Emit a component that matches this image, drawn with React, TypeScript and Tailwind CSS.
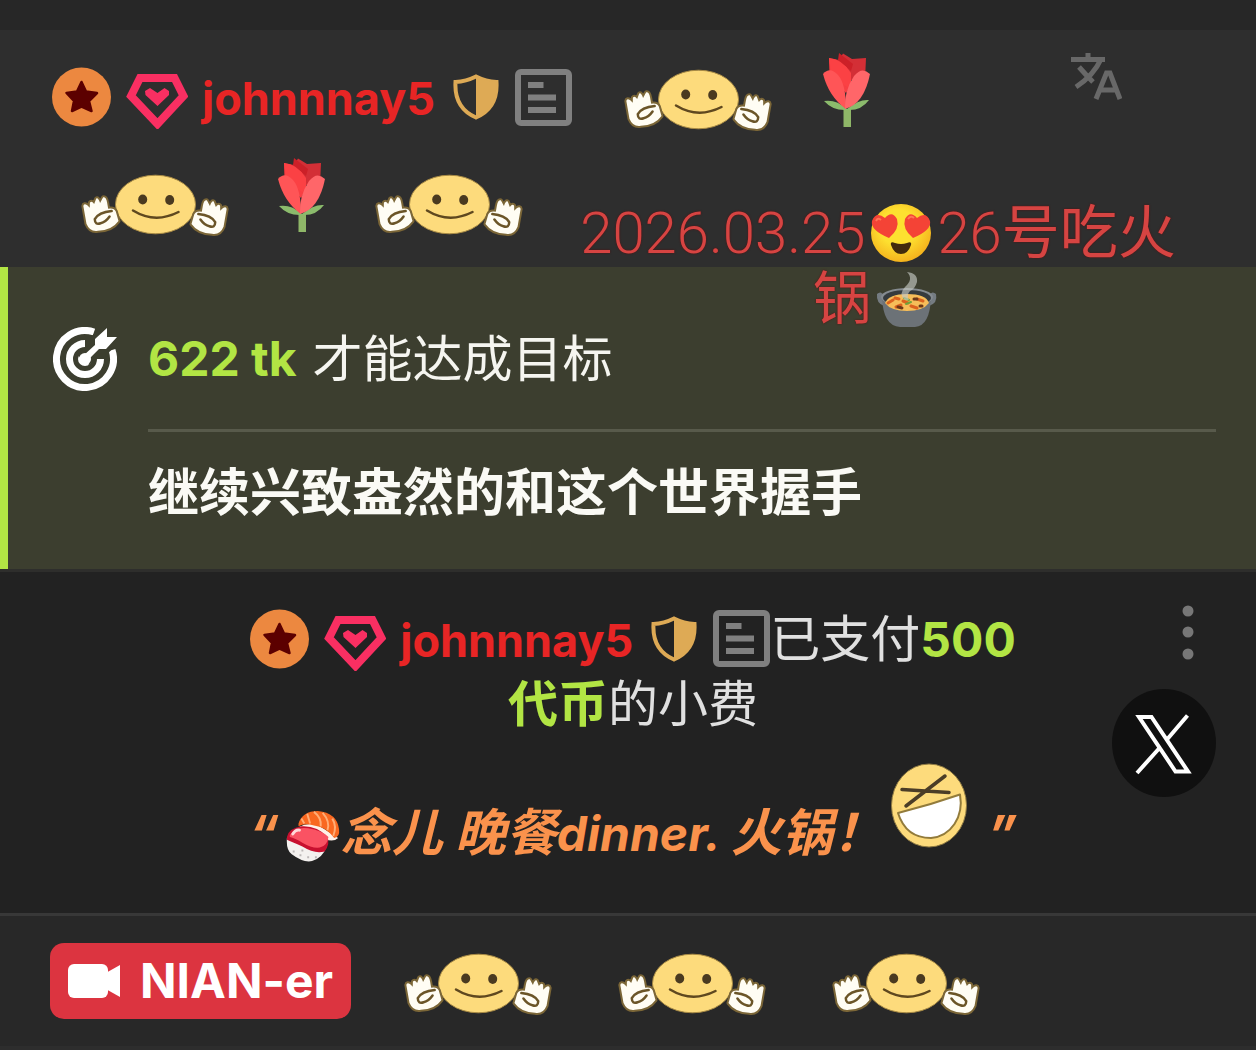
import type { ReactNode } from 'react';

const FONT = "font-['Inter','Noto_Sans_CJK_SC',sans-serif]";

function StarBadge() {
  return (
    <svg width="60" height="60" viewBox="0 0 60 60" className="shrink-0">
      <circle cx="29.500" cy="30" r="29.500" fill="#ec8840" />
      <path
        d="M29.500 15 L34 24.500 L45 26 L37 34 L39.500 44 L29.500 39.500 L20 44 L22 34 L14.500 26 L25 24.500 Z"
        fill="#5c0000"
        stroke="#5c0000"
        strokeWidth="2.500"
        strokeLinejoin="round"
      />
    </svg>
  );
}

function GemBadge() {
  return (
    <svg width="62" height="64" viewBox="0 0 62 64" className="shrink-0">
      <path d="M14 13 H48.500 L57.500 31 L31.500 59 L5 31 Z" fill="none" stroke="#f92f62" strokeWidth="8" />
      <path d="M19 26 L24 23 L31.500 28 L38.500 23 L43 26 V30 L31.500 41 L19.500 30 Z" fill="#f92f62" />
    </svg>
  );
}

function ShieldBadge() {
  return (
    <svg width="46" height="46" viewBox="0 0 46 46" className="shrink-0">
      <path
        d="M23 2.500 Q33 7.500 43.500 8 Q45 34 23 43.500 Q1 34 2.500 8 Q13 7.500 23 2.500 Z"
        fill="none"
        stroke="#deaa55"
        strokeWidth="4"
      />
      <path d="M23 2 Q33 8 44 8 Q45 34 23 44 Z" fill="#deaa55" />
    </svg>
  );
}

function NoteBadge() {
  return (
    <svg width="57" height="57" viewBox="0 0 57 57" className="shrink-0">
      <rect x="3" y="3" width="51" height="51" rx="3" fill="none" stroke="#808080" strokeWidth="6" />
      <path d="M13 16 H28.500 M13 28.500 H41 M13 41 H41" stroke="#808080" strokeWidth="6" />
    </svg>
  );
}

function HugHand() {
  return (
    <g strokeLinecap="round" strokeLinejoin="round" transform="rotate(-10 20 45)">
      <path
        d="M4 34 Q5 31 8 34 L10 37 L11 32 Q13 30 15 34 L18 29 Q20 28 21 34 L25 29 Q28 29 28 35 L28 41 Q34 41 35 45 L36 55 Q28 63 14 61 Q6 61 4 52 Z"
        fill="#fffdf4"
        stroke="#7b6637"
        strokeWidth="4"
        paintOrder="stroke"
      />
      <path d="M31 44 Q18 43 13 49 Q12 55 18 54 Q23 54 28 49" fill="none" stroke="#6b5528" strokeWidth="2.500" />
    </g>
  );
}

function HugFace() {
  return (
    <svg width="148" height="66" viewBox="0 0 148 66" className="shrink-0 overflow-visible">
      <ellipse cx="74.500" cy="35.500" rx="40" ry="29.300" fill="#fddb7c" stroke="#a98b45" strokeWidth="1" />
      <ellipse cx="61.700" cy="30.500" rx="4.500" ry="5" fill="#4a3a20" />
      <ellipse cx="88.700" cy="31" rx="4.500" ry="5" fill="#4a3a20" />
      <path d="M52 41.500 Q74 55 97.500 43" fill="none" stroke="#5f481f" strokeWidth="2.500" strokeLinecap="round" />
      <HugHand />
      <g transform="translate(148 3) scale(-1 1)">
        <HugHand />
      </g>
    </svg>
  );
}

function Rose() {
  return (
    <svg width="50" height="88" viewBox="0 0 50 88" className="shrink-0">
      <path d="M21.500 56 H29 V74 H21.500 Z" fill="#8fb768" />
      <path d="M25 57 Q11 58 2 48 Q14 46 25 56 Q37 46 47 47 Q39 58 25 57 Z" fill="#8bbb6c" />
      <path d="M21 0.500 L30 6 L44 5 L43 27 H8 L7 5 L17 7 Z" fill="#d32f36" />
      <path d="M7 5 L24 13 L30 30 L24 40 L8 24 Z" fill="#f73f43" />
      <path d="M17 0 L31 11 L29 18 L16 7 Z" fill="#cc2028" />
      <path d="M7 5 Q20 6 29 20 V36 L10 25 Z" fill="#fb4144" />
      <path d="M1 21 Q8 13 16 22 Q24 31 24 56 Q7 44 1 21 Z" fill="#ff5557" />
      <path d="M48 21 Q40 13 32 23 Q22 38 23 56 Q42 51 48 21 Z" fill="#ff6669" />
    </svg>
  );
}

function LaughFace() {
  return (
    <svg width="78" height="86" viewBox="0 0 78 86" className="shrink-0">
      <ellipse cx="39" cy="42.500" rx="37.500" ry="41.500" fill="#fddb7c" stroke="#907b43" strokeWidth="1" />
      <path d="M12 26.500 L59 29.500 M16 43 L55 13" stroke="#4b3d27" strokeWidth="3.500" strokeLinecap="round" />
      <path
        d="M8 50 Q40 42 70 31.500 C74 54 61 73 41 75 C24 75 13 66 8 50 Z"
        fill="#ffffff"
        stroke="#927b3b"
        strokeWidth="2"
        strokeLinejoin="round"
      />
    </svg>
  );
}

function HeartEyes() {
  return (
    <svg width="72" height="60" viewBox="0 0 72 60" className="shrink-0">
      <defs>
        <radialGradient id="face" cx="45%" cy="40%" r="60%">
          <stop offset="0.5" stopColor="#fde030" />
          <stop offset="1" stopColor="#f5b31d" />
        </radialGradient>
      </defs>
      <ellipse cx="36" cy="30" rx="30" ry="29" fill="url(#face)" />
      <path d="M24 35 Q5 27 7 18 Q11 8 20 15 Q27 7 32 16 Q35 26 24 35 Z" fill="#f44336" />
      <path d="M48 35 Q37 26 40 16 Q45 7 52 15 Q61 8 65 18 Q67 27 48 35 Z" fill="#f44336" />
      <path d="M11 18 Q13 14 16 17 M43 16 Q46 12 49 15" stroke="#ff7555" strokeWidth="2" fill="none" />
      <path d="M26 42 Q25 38 30 40 Q36 42 42 40 Q47 38 46 42 Q43 51 36 51 Q29 51 26 42 Z" fill="#422b0d" />
    </svg>
  );
}

function HotPot() {
  return (
    <svg width="72" height="60" viewBox="0 0 72 60" className="shrink-0">
      <path d="M6 25 Q10 21 13 27 V37 Q5 34 6 25 Z M65 25 Q61 21 58 27 V37 Q67 34 65 25 Z" fill="#757c82" />
      <path d="M11 28 Q12 57 29 58 H44 Q59 57 60 28 Z" fill="#6c7277" />
      <ellipse cx="36" cy="28" rx="26" ry="9" fill="#858b90" />
      <ellipse cx="36" cy="29" rx="24" ry="8" fill="#353a3d" />
      <path d="M14 34 Q18 25 36 25 Q55 25 58 34 Q52 42 36 42 Q20 42 14 34 Z" fill="#f6bd59" />
      <path
        d="M17 34 L22 31 M25 38 L30 36 M40 37 L46 39 M46 30 L52 32 M32 32 L37 34 M24 29 L28 30"
        stroke="#db621f"
        strokeWidth="3"
        strokeLinecap="round"
      />
      <path d="M27 38 L31 39 M43 30 H46 M49 37 H51" stroke="#6b3718" strokeWidth="3" strokeLinecap="round" />
      <path d="M33 29 L38 31 M35 35 L40 33" stroke="#71a23a" strokeWidth="2" strokeLinecap="round" />
      <path d="M34 31 Q27 25 34 18 Q43 10 36 3 Q47 4 46 13 Q44 20 39 22 Q35 26 38 31 Z" fill="#c5cac3" fillOpacity="0.65" />
    </svg>
  );
}

function Sushi() {
  return (
    <svg width="56" height="54" viewBox="0 0 58 54" className="shrink-0">
      <path d="M14 18 Q27 10 41 20 L55 29 Q50 34 41 30 Z" fill="#fff0e8" />
      <path d="M14 14 Q18 1 34 1 Q54 3 56 20 Q57 28 51 29 Q42 17 30 16 Q20 13 14 17 Z" fill="#f96820" />
      <path
        d="M23 4 L26 14 M30 2 Q38 8 37 17 M39 3 Q47 12 44 21 M49 9 Q54 17 50 27 M17 9 L20 14"
        stroke="#ffad76"
        strokeWidth="2"
        fill="none"
      />
      <path d="M2 29 Q1 42 7 46 Q19 55 28 53 Q39 50 43 38 Z" fill="#f4f1ef" />
      <path d="M2 28 Q4 19 17 17 Q33 16 44 28 Q47 35 41 43 Q31 46 18 38 Q7 33 2 31 Z" fill="#c8102f" />
      <path d="M5 26 Q11 17 24 19 Q38 21 45 28 Q44 37 36 39 Q28 40 18 34 Q10 29 5 28 Z" fill="#fa5263" />
      <path d="M8 25 Q11 20 15 21" stroke="#ffd9da" strokeWidth="3" fill="none" strokeLinecap="round" />
      <path d="M8 43 H10 M15 47 H17 M23 49 H25 M31 49 H33 M17 42 H19" stroke="#bcb8b8" strokeWidth="2" />
    </svg>
  );
}

function TargetIcon() {
  return (
    <svg width="64" height="64" viewBox="0 0 64 64" className="shrink-0" fill="none" stroke="#ffffff">
      <path d="M41 5 A28.500 28.500 0 1 0 59 23" strokeWidth="7" />
      <path d="M32 16.500 A15.500 15.500 0 1 0 47.500 32" strokeWidth="7" />
      <circle cx="32" cy="32" r="7" fill="#ffffff" stroke="none" />
      {/* background halo keeps the arrow clear of the rings */}
      <path
        d="M42 12 L54 1 V10 H64 L53 22 H46 L36 32 L31 28 L42 18 Z"
        fill="#ffffff"
        stroke="#3c3e2f"
        strokeWidth="9"
        paintOrder="stroke"
      />
      <circle cx="32" cy="32" r="6" fill="#ffffff" stroke="none" />
    </svg>
  );
}

function UserTag({ children }: { children?: ReactNode }) {
  return (
    <span className="flex items-center">
      <span className="flex items-center gap-[14px]">
        <StarBadge />
        <GemBadge />
        <a href="#johnnnay5" className="pt-1 text-[45px] leading-[60px] font-bold text-[#e82525]">
          johnnnay5
        </a>
      </span>
      <span className="ml-[18px] flex items-center gap-4">
        <ShieldBadge />
        <NoteBadge />
      </span>
      {children}
    </span>
  );
}

function RoomNotice() {
  return (
    <div className="absolute top-[200px] right-0 w-[756px] text-center text-[58px] leading-[66px] font-light text-[#d64442] font-['Roboto','Noto_Sans_CJK_SC',sans-serif] [text-shadow:0_0_2px_#5c0f0f]">
      <div className="flex items-center justify-center">
        2026.03.25
        <HeartEyes />
        <span>
          26<span className="font-normal">号吃火</span>
        </span>
      </div>
      <div className="flex items-center justify-center">
        <span className="font-normal">锅</span>
        <HotPot />
      </div>
    </div>
  );
}

export default function App() {
  return (
    <main className={`relative min-h-screen overflow-hidden bg-[#2d2d2d] ${FONT}`}>
      <div className="h-[30px] bg-[#272727]" />

      {/* Chat message */}
      <section className="flex items-start justify-between bg-[#2e2e2e] pt-[23px] pr-[134px] pb-[21px] pl-[52px]">
        <div className="flex flex-col gap-[17px]">
          <div className="flex items-center gap-[52px]">
            <UserTag />
            <span className="flex items-center gap-[50px]">
              <HugFace />
              <Rose />
            </span>
          </div>
          <div className="ml-[29px] flex items-center gap-12">
            <HugFace />
            <Rose />
            <HugFace />
          </div>
        </div>
        <button aria-label="翻译" className="cursor-pointer">
          <svg width="52" height="48" viewBox="0 0 52 48" fill="none" stroke="#686868" strokeWidth="5">
            <path d="M1 6.500 H35 M18 0 V6 M31 6 Q24 22 6 34 M9 14 Q16 22 23 29" />
            <path d="M26 46 L36.500 20 H40 L50 46 M30 37 H47" />
          </svg>
        </button>
      </section>

      {/* Goal */}
      <section className="flex gap-[31px] border-l-8 border-[#b2e544] bg-[#3c3e2f] pt-[60px] pr-10 pb-[44px] pl-[45px]">
        <TargetIcon />
        <div className="flex-1">
          <p className="flex items-center text-[50px] leading-[64px] text-[#f5f5f0]">
            <strong className="mr-4 text-[48px] font-bold text-[#b2e544]">622 tk</strong>
            才能达成目标
          </p>
          <hr className="mt-[38px] mb-[29px] border-0 border-t-[3px] border-[#585a4b]" />
          <p className="text-[51px] leading-[64px] font-bold text-[#fafaf5]">继续兴致盎然的和这个世界握手</p>
        </div>
      </section>

      {/* Tip */}
      <section className="flex flex-col items-center border-t-[3px] border-b-[3px] border-t-[#2e2e2c] border-b-[#383838] bg-[#222222] pt-[33px] pr-10 pb-[50px] pl-[50px] text-[50px] leading-[64px] text-[#e0e0e0]">
        <UserTag>
          <span className="pt-[2px]">
            已支付<b className="text-[48px] text-[#b2e544]">500</b>
          </span>
        </UserTag>
        <p>
          <b className="text-[#b2e544]">代币</b>的小费
        </p>
        <blockquote className="mt-[27px] flex items-end text-[51px] leading-[58px] text-[#fa924c] italic font-bold">
          <span className="mr-[6px]">“</span>
          <Sushi />
          <span className="whitespace-pre">念儿 晚餐<span className="text-[48px]">dinner. </span>火锅！</span>
          <span className="mb-[14px] ml-[6px]">
            <LaughFace />
          </span>
          <span className="ml-5">”</span>
        </blockquote>
      </section>

      <section className="flex items-center bg-[#282828] py-[27px] pl-[50px]">
        <button className="mr-[53px] flex h-[76px] cursor-pointer items-center gap-5 rounded-[14px] bg-[#dc3440] px-[18px] text-[48px] leading-[60px] font-bold text-white">
          <svg width="52" height="36" viewBox="0 0 52 36" fill="#ffffff">
            <rect x="0" y="1" width="40" height="34" rx="6" />
            <path d="M36 11 L52 2 V34 L36 25 Z" />
          </svg>
          NIAN-er
        </button>
        <div className="flex items-center gap-[66px]">
          <HugFace />
          <HugFace />
          <HugFace />
        </div>
      </section>

      <RoomNotice />

      <button aria-label="更多" className="absolute top-[604px] right-[60px] cursor-pointer">
        <svg width="16" height="56" viewBox="0 0 16 56" fill="#777777">
          <circle cx="8" cy="7" r="5.500" />
          <circle cx="8" cy="28" r="5.500" />
          <circle cx="8" cy="50" r="5.500" />
        </svg>
      </button>

      <button aria-label="X" className="absolute top-[689px] right-10 cursor-pointer">
        <svg width="104" height="108" viewBox="0 0 104 108" fill="none" stroke="#ffffff" strokeWidth="4">
          <ellipse cx="52" cy="54" rx="52" ry="54" fill="#101010" stroke="none" />
          <path d="M27 28 H39.500 L76 82.500 H63.500 Z M75.500 26.500 L55 50.500 M25 84 L47.500 59" />
        </svg>
      </button>
    </main>
  );
}
